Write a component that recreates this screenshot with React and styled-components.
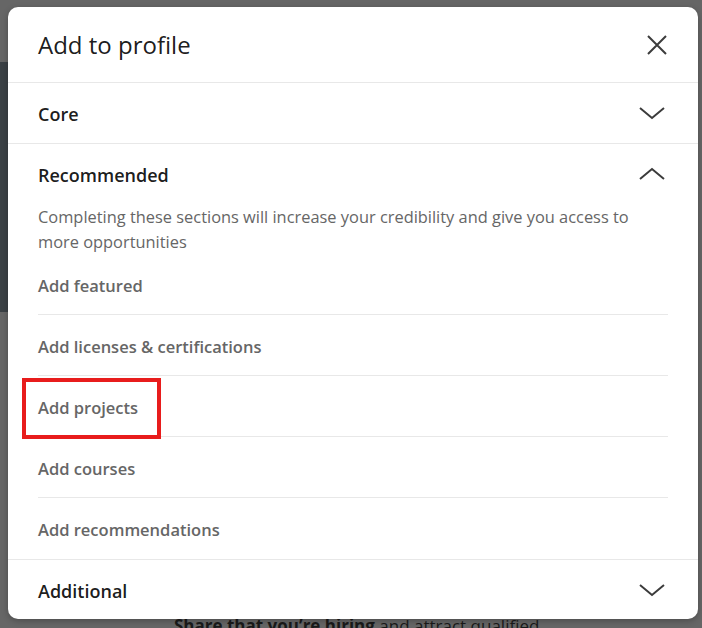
import React from "react";
import styled, { createGlobalStyle } from "styled-components";

const Global = createGlobalStyle`
  html, body { margin: 0; padding: 0; }
  body {
    width: 702px;
    height: 628px;
    overflow: hidden;
    background: #666666;
    font-family: "Open Sans", "Noto Sans", sans-serif;
  }
`;

const Page = styled.div`
  position: relative;
  width: 702px;
  height: 628px;
  overflow: hidden;
  background: #666666;
`;

const SideStrip = styled.div`
  position: absolute;
  left: 0;
  top: 62px;
  width: 10px;
  height: 250px;
  background: #3b4145;
`;

const BehindText = styled.div`
  position: absolute;
  left: 174px;
  top: 614px;
  font-size: 17px;
  color: #1a1a1a;
  white-space: nowrap;
  b { font-weight: 700; }
`;

const Modal = styled.div`
  position: absolute;
  left: 8px;
  top: 7px;
  width: 690px;
  height: 612px;
  background: #ffffff;
  border-radius: 10px;
  box-shadow: 0 2px 6px rgba(0, 0, 0, 0.25);
  display: flex;
  flex-direction: column;
  overflow: hidden;
`;

const Header = styled.div`
  height: 75px;
  padding: 0 30px;
  display: flex;
  align-items: center;
  justify-content: space-between;
  border-bottom: 1px solid #e8e8e8;
  flex-shrink: 0;
`;

const Title = styled.h2`
  margin: 0;
  font-size: 24px;
  font-weight: 400;
  color: rgba(0, 0, 0, 0.9);
`;

const IconButton = styled.button`
  border: 0;
  background: none;
  padding: 0;
  width: 26px;
  height: 26px;
  display: flex;
  align-items: center;
  justify-content: center;
  color: #3c3c3c;
  margin-right: -2px;
`;

const Section = styled.div`
  border-bottom: ${(p) => (p.$last ? "none" : "1px solid #e8e8e8")};
  flex-shrink: 0;
`;

const SectionHead = styled.div`
  height: 60px;
  padding: 0 30px;
  display: flex;
  align-items: center;
  justify-content: space-between;
`;

const SectionTitle = styled.span`
  font-size: 18px;
  font-weight: 600;
  color: rgba(0, 0, 0, 0.9);
  padding-top: 2px;
`;

const Chevron = styled.svg`
  width: 28px;
  height: 14px;
  color: #3c3c3c;
  margin-right: 2px;
`;

const Body = styled.div`
  padding: 0 30px;
`;

const Description = styled.p`
  margin: 0;
  font-size: 16.4px;
  line-height: 25px;
  color: #666666;
`;

const Item = styled.div`
  position: relative;
  height: 61px;
  padding-top: 2px;
  box-sizing: border-box;
  display: flex;
  align-items: center;
  border-bottom: ${(p) => (p.$last ? "none" : "1px solid #e8e8e8")};
  font-size: 16.5px;
  font-weight: 600;
  color: #666666;
`;

const Highlight = styled.span`
  position: absolute;
  left: -16px;
  top: 2px;
  width: 131px;
  height: 53px;
  border: 4px solid #e81c1c;
`;

const ChevronDown = () => (
  <Chevron viewBox="0 0 28 14" fill="none">
    <path d="M2 2l12 10L26 2" stroke="currentColor" strokeWidth="2" />
  </Chevron>
);

const ChevronUp = () => (
  <Chevron viewBox="0 0 28 14" fill="none">
    <path d="M2 12L14 2l12 10" stroke="currentColor" strokeWidth="2" />
  </Chevron>
);

const items = [
  "Add featured",
  "Add licenses & certifications",
  "Add projects",
  "Add courses",
  "Add recommendations",
];

export default function App() {
  return (
    <Page>
      <Global />
      <SideStrip />
      <BehindText>
        <b>Share that you’re hiring</b> and attract qualified
      </BehindText>
      <Modal>
        <Header>
          <Title>Add to profile</Title>
          <IconButton aria-label="Dismiss">
            <svg width="22" height="22" viewBox="0 0 22 22" fill="none">
              <path d="M2 2l18 18M20 2L2 20" stroke="currentColor" strokeWidth="2" />
            </svg>
          </IconButton>
        </Header>
        <Section>
          <SectionHead>
            <SectionTitle>Core</SectionTitle>
            <ChevronDown />
          </SectionHead>
        </Section>
        <Section>
          <SectionHead>
            <SectionTitle>Recommended</SectionTitle>
            <ChevronUp />
          </SectionHead>
          <Body>
            <Description>
              Completing these sections will increase your credibility and give you access to more
              opportunities
            </Description>
            {items.map((label, i) => (
              <Item key={label} $last={i === items.length - 1}>
                {label === "Add projects" && <Highlight />}
                {label}
              </Item>
            ))}
          </Body>
        </Section>
        <Section $last>
          <SectionHead>
            <SectionTitle>Additional</SectionTitle>
            <ChevronDown />
          </SectionHead>
        </Section>
      </Modal>
    </Page>
  );
}
